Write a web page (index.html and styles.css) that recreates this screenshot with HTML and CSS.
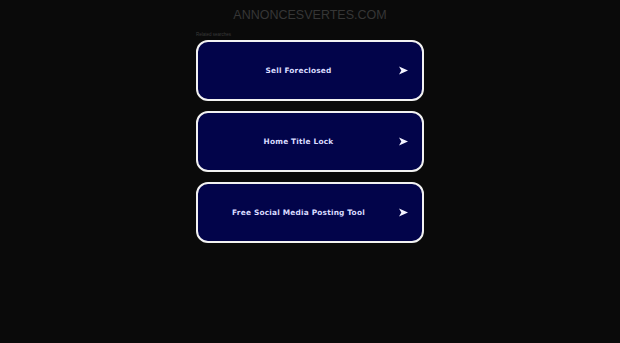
FILE: index.html
```html
<!DOCTYPE html>
<html lang="en">
<head>
<meta charset="utf-8">
<title>annoncesvertes.com</title>
<link rel="stylesheet" href="styles.css">
</head>
<body>
<header class="header">ANNONCESVERTES.COM</header>
<main class="wrap">
  <div class="label">Related searches</div>
  <ul class="links">
    <li><a class="link" href="#"><span class="link-text">Sell Foreclosed</span><svg class="arrow" viewBox="0 0 10 10" aria-hidden="true"><path d="M0 0.5 L10 5 L0 9.5 L2.6 5 Z"/></svg></a></li>
    <li><a class="link" href="#"><span class="link-text">Home Title Lock</span><svg class="arrow" viewBox="0 0 10 10" aria-hidden="true"><path d="M0 0.5 L10 5 L0 9.5 L2.6 5 Z"/></svg></a></li>
    <li><a class="link" href="#"><span class="link-text">Free Social Media Posting Tool</span><svg class="arrow" viewBox="0 0 10 10" aria-hidden="true"><path d="M0 0.5 L10 5 L0 9.5 L2.6 5 Z"/></svg></a></li>
  </ul>
</main>
</body>
</html>
```
FILE: styles.css
```css
html, body {
  margin: 0;
  padding: 0;
  background: #0a0a0a;
  height: 100%;
}
body {
  font-family: "Liberation Sans", Arial, sans-serif;
}
.header {
  height: 31px;
  line-height: 31px;
  text-align: center;
  font-size: 12.5px;
  color: #363636;
}
.wrap {
  width: 228px;
  margin: 0 auto;
}
.label {
  height: 9px;
  line-height: 7px;
  font-size: 4.5px;
  color: #3a3a3a;
}
.links {
  list-style: none;
  margin: 0;
  padding: 0;
  display: flex;
  flex-direction: column;
  gap: 10px;
}
.link {
  display: flex;
  align-items: center;
  height: 61px;
  box-sizing: border-box;
  border: 2px solid #f2f2f2;
  border-radius: 12px;
  background: #02044a;
  padding-right: 14px;
  text-decoration: none;
}
.link-text {
  flex: 1;
  text-align: center;
  font-family: "DejaVu Sans", Verdana, sans-serif;
  font-size: 7.4px;
  font-weight: bold;
  letter-spacing: 0.2px;
  color: #dadcff;
}
.arrow {
  width: 9px;
  height: 9px;
  fill: #f4f4ff;
}
```
